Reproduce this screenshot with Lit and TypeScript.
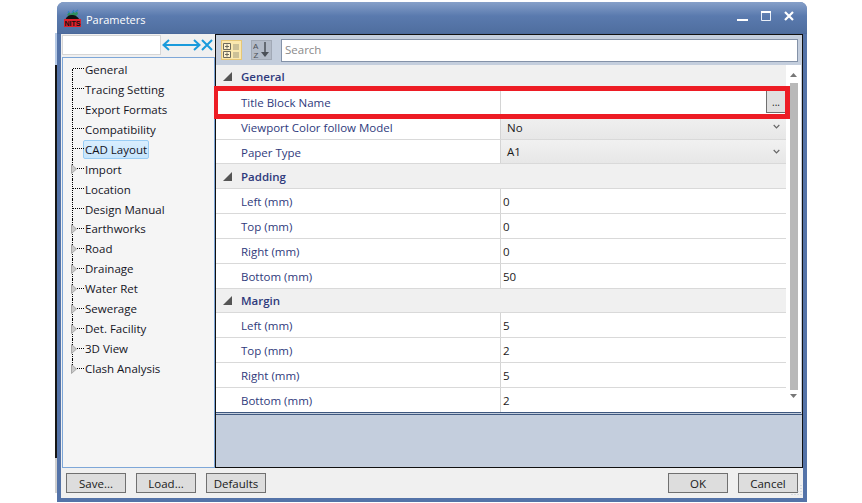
import { LitElement, html, css, svg } from "lit";
import { customElement } from "lit/decorators.js";

type TreeItem = { label: string; arrow?: boolean; selected?: boolean };
const TREE: TreeItem[] = [
  { label: "General" },
  { label: "Tracing Setting" },
  { label: "Export Formats" },
  { label: "Compatibility" },
  { label: "CAD Layout", selected: true },
  { label: "Import", arrow: true },
  { label: "Location" },
  { label: "Design Manual" },
  { label: "Earthworks", arrow: true },
  { label: "Road", arrow: true },
  { label: "Drainage", arrow: true },
  { label: "Water Ret", arrow: true },
  { label: "Sewerage", arrow: true },
  { label: "Det. Facility", arrow: true },
  { label: "3D View", arrow: true },
  { label: "Clash Analysis", arrow: true },
];

type Row =
  | { kind: "cat"; label: string }
  | { kind: "prop"; label: string; value: string; type?: "browse" | "combo" };
const ROWS: Row[] = [
  { kind: "cat", label: "General" },
  { kind: "prop", label: "Title Block Name", value: "", type: "browse" },
  { kind: "prop", label: "Viewport Color follow Model", value: "No", type: "combo" },
  { kind: "prop", label: "Paper Type", value: "A1", type: "combo" },
  { kind: "cat", label: "Padding" },
  { kind: "prop", label: "Left (mm)", value: "0" },
  { kind: "prop", label: "Top (mm)", value: "0" },
  { kind: "prop", label: "Right (mm)", value: "0" },
  { kind: "prop", label: "Bottom (mm)", value: "50" },
  { kind: "cat", label: "Margin" },
  { kind: "prop", label: "Left (mm)", value: "5" },
  { kind: "prop", label: "Top (mm)", value: "2" },
  { kind: "prop", label: "Right (mm)", value: "5" },
  { kind: "prop", label: "Bottom (mm)", value: "2" },
];

const chevron = svg`<svg class="chev" width="7" height="5" viewBox="0 0 7 5"><path d="M.7 1l2.8 2.8L6.3 1" fill="none" stroke="#666" stroke-width="1.2"/></svg>`;

@customElement("app-root")
export class AppRoot extends LitElement {
  static styles = css`
    :host {
      display: block;
      width: 862px;
      height: 503px;
      background: #fff;
      overflow: hidden;
      font-family: "Open Sans", "Noto Sans", sans-serif;
      font-size: 11.5px;
      color: #1c1c1c;
      position: relative;
    }
    .behind {
      position: absolute;
      left: 55px;
      top: 33px;
      width: 2px;
      height: 460px;
      background: linear-gradient(#b4c8e4 0 32px, #161616 32px 425px, #cfcfcf 425px);
    }
    .window {
      box-sizing: border-box;
      width: 750px;
      height: 500px;
      margin: 2px 0 0 57px;
      background: #5473a8;
      border-radius: 7px 7px 0 0;
      display: flex;
      flex-direction: column;
      padding: 0 4px 4px;
    }
    .title {
      height: 32px;
      flex: none;
      margin: 0 -4px;
      padding: 0 13px 0 7px;
      border-radius: 7px 7px 0 0;
      background: linear-gradient(#86a0c9, #5a7aae 45%, #4f6e9f);
      display: flex;
      align-items: center;
      gap: 5px;
      color: #fff;
      box-sizing: border-box;
      border-bottom: 1px solid #4b699b;
    }
    .title-text {
      flex: 1;
      font-size: 11px;
      margin-top: 3px;
    }
    .winbtns {
      display: flex;
      align-items: center;
      gap: 13px;
      margin-top: -3px;
    }
    .body {
      flex: 1;
      min-height: 0;
      background: #f0f0f0;
      display: flex;
      flex-direction: column;
    }
    .main {
      flex: 1;
      min-height: 0;
      display: flex;
    }
    .left {
      width: 154px;
      flex: none;
      display: flex;
      flex-direction: column;
      padding-top: 1px;
      box-sizing: border-box;
    }
    .filter {
      height: 20px;
      display: flex;
      align-items: center;
      margin: 0 0 2px 1px;
    }
    .filter-input {
      width: 99px;
      height: 20px;
      box-sizing: border-box;
      background: #fff;
      border: 1px solid #d6d6d6;
      flex: none;
    }
    .tree {
      flex: 1;
      box-sizing: border-box;
      margin-left: 1px;
      border: 1px solid #7ea7d8;
      background: #f5f5f5;
      padding-top: 1.500px;
    }
    .node {
      height: 19.95px;
      display: flex;
      align-items: center;
      position: relative;
      padding-left: 9px;
    }
    .conn {
      width: 12px;
      height: 100%;
      flex: none;
      box-sizing: border-box;
      border-left: 1px dotted #000;
      position: relative;
    }
    .node:first-child .conn {
      height: 50%;
      align-self: flex-end;
    }
    .node:last-child .conn {
      height: 50%;
      align-self: flex-start;
    }
    .conn::after {
      content: "";
      position: absolute;
      left: 0;
      right: 0;
      top: 9px;
      border-top: 1px dotted #000;
    }
    .node:first-child .conn::after {
      top: -1px;
    }
    .arrow {
      position: absolute;
      left: 8px;
      top: 5px;
    }
    .label {
      padding: 0 1px;
      margin-left: -1px;
      height: 19px;
      line-height: 17px;
      box-sizing: border-box;
      border: 1px solid transparent;
      color: #14141e;
    }
    .label.sel {
      background: linear-gradient(#d9eefe, #c6e5fd);
      border-color: #99cdf5;
      border-radius: 2px;
    }
    .right {
      flex: 1;
      min-width: 0;
      box-sizing: border-box;
      border: 1px solid #111;
      background: #c4cedd;
      display: flex;
      flex-direction: column;
      position: relative;
    }
    .toolbar {
      height: 30px;
      flex: none;
      display: flex;
      align-items: center;
      padding: 0 4px 0 5px;
      gap: 9px;
      box-sizing: border-box;
    }
    .tool {
      width: 21px;
      height: 20px;
      box-sizing: border-box;
      flex: none;
      display: flex;
      align-items: center;
      justify-content: center;
    }
    .tool.on {
      background: #fbe8ae;
      border: 1px solid #e6c777;
    }
    .tool.off {
      background: #b3bbc8;
      border: 1px solid #a1a9b6;
    }
    .search {
      flex: 1;
      height: 23px;
      box-sizing: border-box;
      background: #fff;
      border: 1.5px solid #8492a8;
      display: flex;
      align-items: center;
      padding: 0 0 2px 3px;
      color: #8a8a8a;
    }
    .gridwrap {
      height: 348px;
      box-sizing: border-box;
      flex: none;
      display: flex;
      background: #fff;
      margin-right: 1px;
      border-bottom: 1px solid #3f587f;
      overflow: hidden;
    }
    .grid {
      flex: 1;
      min-width: 0;
    }
    .row {
      height: 24.85px;
      box-sizing: border-box;
      display: flex;
      border-bottom: 1px solid #d9d9d9;
      color: #2f3a7c;
    }
    .row.cat {
      background: #f0f0f0;
      font-weight: 600;
      align-items: center;
      padding: 0 0 0 7px;
      gap: 9px;
    }
    .name {
      width: 285px;
      flex: none;
      box-sizing: border-box;
      padding-left: 25px;
      border-right: 1px solid #d4d4d4;
      background: #fff;
      line-height: 25px;
    }
    .val {
      flex: 1;
      min-width: 0;
      display: flex;
      align-items: center;
      padding: 1px 0 0 2px;
      box-sizing: border-box;
      color: #1a1a1a;
      justify-content: space-between;
    }
    .val.combo {
      background: linear-gradient(#f1f1f1, #e7e7e7);
      padding-right: 6px;
      padding-left: 6px;
    }
    .chev {
      margin-top: -1px;
    }
    .dots {
      width: 20px;
      height: 23px;
      margin-top: -1px;
      box-sizing: border-box;
      background: #e0e0e0;
      border: 1px solid #707070;
      text-align: center;
      line-height: 23px;
      font-size: 10px;
      color: #222;
    }
    .scroll {
      width: 15px;
      flex: none;
      background: #fff;
      display: flex;
      flex-direction: column;
      align-items: center;
      padding-top: 8px;
      box-sizing: border-box;
    }
    .thumb {
      width: 8px;
      height: 307px;
      background: #b9b9b9;
      margin: 6px 0 4px;
      flex: none;
    }
    .gap {
      height: 2px;
      box-sizing: border-box;
      flex: none;
      border-bottom: 1px solid #3f587f;
    }
    .highlight {
      position: absolute;
      left: -2px;
      top: 51px;
      width: 576px;
      height: 33px;
      box-sizing: border-box;
      border: 5px solid #ed1c24;
      border-left-width: 4px;
      pointer-events: none;
    }
    .footer {
      height: 30px;
      flex: none;
      display: flex;
      align-items: center;
      padding: 0 5px;
      gap: 10px;
      position: relative;
    }
    .btn {
      width: 60px;
      height: 20px;
      box-sizing: border-box;
      background: #dddddd;
      border: 1px solid #707070;
      display: flex;
      align-items: center;
      justify-content: center;
      color: #1a1a1a;
    }
    .spacer {
      flex: 1;
    }
    .grip {
      position: absolute;
      right: 0;
      bottom: 0;
    }
  `;

  private logo() {
    return svg`<svg width="17" height="18" viewBox="0 0 17 18">
      <path d="M3 6l2-3 2 2 2-3 2 2 2-2 1 3-2 2H5z" fill="#2f8f5f"/>
      <path d="M4 4l1-2M8 4l2-3M11 3l3-2" stroke="#2f7fc8" stroke-width="1.2"/>
      <path d="M1 11c2-4 4-5 7-5s5 1 8 5z" fill="#111"/>
      <rect x="0" y="10" width="17" height="8" fill="#e0202a"/>
      <text x="8.5" y="17" text-anchor="middle" font-family="Liberation Sans" font-size="7" font-weight="700" fill="#111">NITS</text>
    </svg>`;
  }

  render() {
    return html`
      <div class="behind"></div>
      <div class="window">
        <div class="title">
          ${this.logo()}
          <div class="title-text">Parameters</div>
          <div class="winbtns">
            <svg width="11" height="10" viewBox="0 0 11 10"><rect x="0" y="8" width="11" height="2" fill="#fff"/></svg>
            <svg width="10" height="10" viewBox="0 0 10 10"><path d="M.5 2v7.5h9V1.500H.5" fill="none" stroke="#e8eef8" stroke-width="1"/><rect width="10" height="2" fill="#fff"/></svg>
            <svg width="10" height="10" viewBox="0 0 10 10"><path d="M1 1l8 8M9 1l-8 8" stroke="#fff" stroke-width="2.2"/></svg>
          </div>
        </div>
        <div class="body">
          <div class="main">
            <div class="left">
              <div class="filter">
                <div class="filter-input"></div>
                <svg width="53" height="14" viewBox="0 0 53 14" style="flex:none">
                  <path d="M3 7h35M8 2L2.500 7 8 12M33 2l5.500 5L33 12" fill="none" stroke="#1a9bdc" stroke-width="2"/>
                  <path d="M41 2l10 10M51 2L41 12" stroke="#1a9bdc" stroke-width="2"/>
                </svg>
              </div>
              <div class="tree">
                ${TREE.map(
                  (t) => html`<div class="node">
                    <div class="conn"></div>
                    ${t.arrow
                      ? html`<svg class="arrow" width="6" height="10" viewBox="0 0 6 10"><path d="M.5.500L5.500 5 .5 9.500z" fill="#c9c9c9" stroke="#a8a8a8"/></svg>`
                      : ""}
                    <div class="label ${t.selected ? "sel" : ""}">${t.label}</div>
                  </div>`
                )}
              </div>
            </div>
            <div class="right">
              <div class="toolbar">
                <div class="tool on">
                  <svg width="17" height="15" viewBox="0 0 17 15">
                    <path d="M.5.500h7v6h-7zM.5 8.500h7v6h-7z" fill="#fdf3d0" stroke="#6d6a5c"/>
                    <path d="M2 3.500h4M4 1.500v4M2 11.500h4M4 9.500v4" stroke="#6d6a5c"/>
                    <path d="M10 2h6M10 4h6M10 6h6M10 10h6M10 12h6M10 14h6" stroke="#9f9a80" stroke-width="1.200"/>
                  </svg>
                </div>
                <div class="tool off">
                  <svg width="17" height="16" viewBox="0 0 17 16">
                    <text x="0" y="7" font-family="Liberation Sans" font-size="8" fill="#4a4f57">A</text>
                    <text x="0.500" y="15.500" font-family="Liberation Sans" font-size="8" fill="#4a4f57">Z</text>
                    <path d="M12 0v13" stroke="#4a4f57" stroke-width="1.500"/>
                    <path d="M8 10h8l-4 5z" fill="#4a4f57"/>
                  </svg>
                </div>
                <div class="search">Search</div>
              </div>
              <div class="gridwrap">
                <div class="grid">
                  ${ROWS.map((r) =>
                    r.kind === "cat"
                      ? html`<div class="row cat">
                          <svg width="9" height="9" viewBox="0 0 9 9"><path d="M9 0v9H0z" fill="#555"/></svg>
                          <span>${r.label}</span>
                        </div>`
                      : html`<div class="row">
                          <div class="name">${r.label}</div>
                          <div class="val ${r.type === "combo" ? "combo" : ""}">
                            <span>${r.value}</span>
                            ${r.type === "combo" ? chevron : ""}
                            ${r.type === "browse" ? html`<div class="dots">...</div>` : ""}
                          </div>
                        </div>`
                  )}
                </div>
                <div class="scroll">
                  <svg width="7" height="4" viewBox="0 0 7 4"><path d="M3.500 0L7 4H0z" fill="#777"/></svg>
                  <div class="thumb"></div>
                  <svg width="7" height="4" viewBox="0 0 7 4"><path d="M3.500 4L7 0H0z" fill="#777"/></svg>
                </div>
              </div>
              <div class="gap"></div>
              <div class="highlight"></div>
            </div>
          </div>
          <div class="footer">
            <div class="btn">Save...</div>
            <div class="btn">Load...</div>
            <div class="btn">Defaults</div>
            <div class="spacer"></div>
            <div class="btn">OK</div>
            <div class="btn">Cancel</div>
            <svg class="grip" width="12" height="14" viewBox="0 0 12 14">
              <path d="M10 1v1M10 4v1M10 7v1M10 10v1M7 7v1M7 10v1M4 10v1M1 10v1" stroke="#b7c3d4" stroke-width="1"/>
            </svg>
          </div>
        </div>
      </div>
    `;
  }
}
